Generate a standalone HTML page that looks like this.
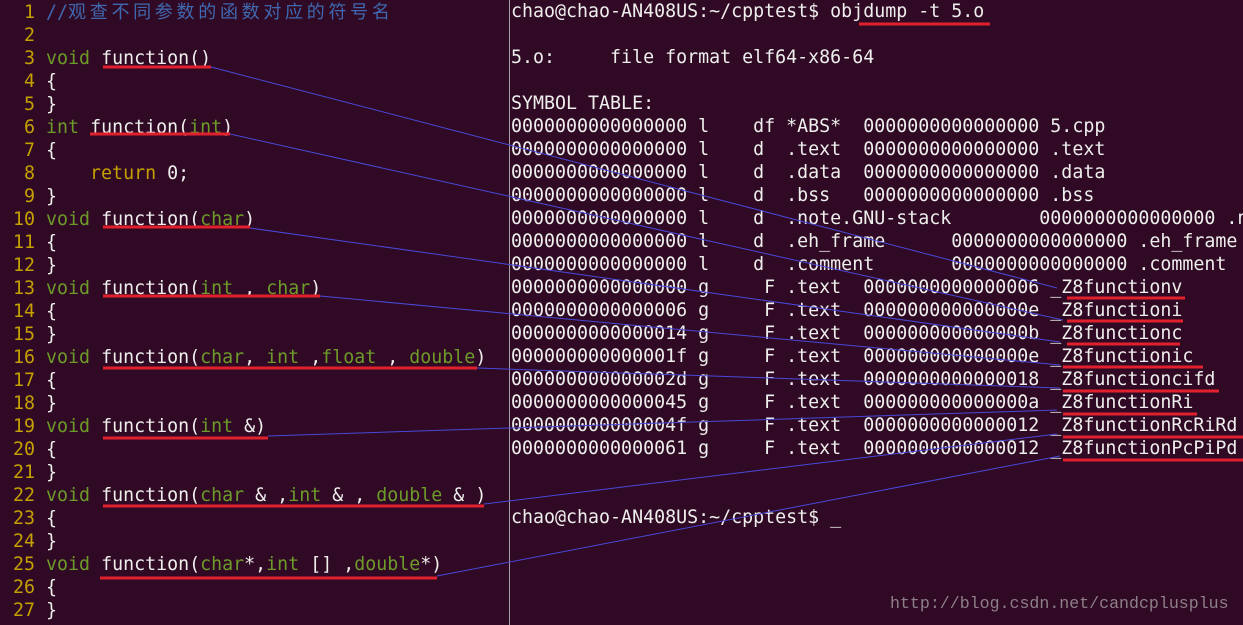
<!DOCTYPE html>
<html><head><meta charset="utf-8"><style>
html,body{margin:0;padding:0;}
body{width:1243px;height:625px;background:#300a24;position:relative;overflow:hidden;font-family:"DejaVu Sans Mono","Liberation Mono","Noto Sans CJK SC",monospace;font-size:18.3px;color:#eeeeec;}
pre{margin:0;font:inherit;line-height:23px;white-space:pre;position:absolute;top:0;}
#ed{left:13px;width:495px;overflow:hidden;}
#tm{left:511px;width:732px;overflow:hidden;}
.n{color:#c4a000}.k{color:#6d9b2a}.c{color:#3f68b0}.y{color:#c4a000}
.cj{font-family:"Noto Sans CJK SC",sans-serif;letter-spacing:3.7px;font-size:18px}
#div{position:absolute;left:509px;top:0;width:1px;height:625px;background:#a8a0a4;}
svg{position:absolute;left:0;top:0;}
#wm{position:absolute;left:890px;top:594px;font-family:"Liberation Mono",monospace;font-size:16.6px;color:#8e7f88;}
</style></head><body>
<pre id="ed"><span class="n"> 1</span> <span class="c">//<span class="cj">观查不同参数的函数对应的符号名</span></span>
<span class="n"> 2</span>
<span class="n"> 3</span> <span class="k">void</span> function()
<span class="n"> 4</span> {
<span class="n"> 5</span> }
<span class="n"> 6</span> <span class="k">int</span> function(<span class="k">int</span>)
<span class="n"> 7</span> {
<span class="n"> 8</span>     <span class="y">return</span> 0;
<span class="n"> 9</span> }
<span class="n">10</span> <span class="k">void</span> function(<span class="k">char</span>)
<span class="n">11</span> {
<span class="n">12</span> }
<span class="n">13</span> <span class="k">void</span> function(<span class="k">int</span> , <span class="k">char</span>)
<span class="n">14</span> {
<span class="n">15</span> }
<span class="n">16</span> <span class="k">void</span> function(<span class="k">char</span>, <span class="k">int</span> ,<span class="k">float</span> , <span class="k">double</span>)
<span class="n">17</span> {
<span class="n">18</span> }
<span class="n">19</span> <span class="k">void</span> function(<span class="k">int</span> &amp;)
<span class="n">20</span> {
<span class="n">21</span> }
<span class="n">22</span> <span class="k">void</span> function(<span class="k">char</span> &amp; ,<span class="k">int</span> &amp; , <span class="k">double</span> &amp; )
<span class="n">23</span> {
<span class="n">24</span> }
<span class="n">25</span> <span class="k">void</span> function(<span class="k">char</span>*,<span class="k">int</span> [] ,<span class="k">double</span>*)
<span class="n">26</span> {
<span class="n">27</span> }</pre>
<div id="div"></div>
<pre id="tm">chao@chao-AN408US:~/cpptest$ objdump -t 5.o

5.o:     file format elf64-x86-64

SYMBOL TABLE:
0000000000000000 l    df *ABS*  0000000000000000 5.cpp
0000000000000000 l    d  .text  0000000000000000 .text
0000000000000000 l    d  .data  0000000000000000 .data
0000000000000000 l    d  .bss   0000000000000000 .bss
0000000000000000 l    d  .note.GNU-stack        0000000000000000 .note.GNU-stack
0000000000000000 l    d  .eh_frame      0000000000000000 .eh_frame
0000000000000000 l    d  .comment       0000000000000000 .comment
0000000000000000 g     F .text  0000000000000006 _Z8functionv
0000000000000006 g     F .text  000000000000000e _Z8functioni
0000000000000014 g     F .text  000000000000000b _Z8functionc
000000000000001f g     F .text  000000000000000e _Z8functionic
000000000000002d g     F .text  0000000000000018 _Z8functioncifd
0000000000000045 g     F .text  000000000000000a _Z8functionRi
000000000000004f g     F .text  0000000000000012 _Z8functionRcRiRd
0000000000000061 g     F .text  0000000000000012 _Z8functionPcPiPd


chao@chao-AN408US:~/cpptest$ _</pre>
<svg width="1243" height="625">
<g stroke="#e0202c" stroke-width="3">
<line x1="103" y1="67" x2="211" y2="67"/>
<line x1="90" y1="134" x2="230" y2="134"/>
<line x1="103" y1="227" x2="250" y2="227"/>
<line x1="103" y1="296" x2="320" y2="296"/>
<line x1="103" y1="368" x2="477" y2="368"/>
<line x1="103" y1="438" x2="268" y2="438"/>
<line x1="103" y1="506" x2="484" y2="506"/>
<line x1="100" y1="578" x2="437" y2="578"/>
<line x1="859" y1="24" x2="990" y2="24"/>
<line x1="1067" y1="298" x2="1185" y2="298"/>
<line x1="1067" y1="321" x2="1183" y2="321"/>
<line x1="1067" y1="344" x2="1180" y2="344"/>
<line x1="1063" y1="367" x2="1203" y2="367"/>
<line x1="1063" y1="391" x2="1219" y2="391"/>
<line x1="1063" y1="414" x2="1197" y2="414"/>
<line x1="1063" y1="437" x2="1243" y2="437"/>
<line x1="1063" y1="460" x2="1243" y2="460"/>
</g>
<g stroke="#4848d8" stroke-width="1">
<line x1="211" y1="67" x2="1057" y2="288"/>
<line x1="230" y1="134" x2="1063" y2="320"/>
<line x1="250" y1="228" x2="1060" y2="342"/>
<line x1="320" y1="296" x2="1060" y2="365"/>
<line x1="477" y1="368" x2="1060" y2="388"/>
<line x1="268" y1="436" x2="1057" y2="410"/>
<line x1="484" y1="504" x2="1057" y2="434"/>
<line x1="437" y1="576" x2="1060" y2="456"/>
</g>
</svg>
<div id="wm">http://blog.csdn.net/candcplusplus</div>
</body></html>
